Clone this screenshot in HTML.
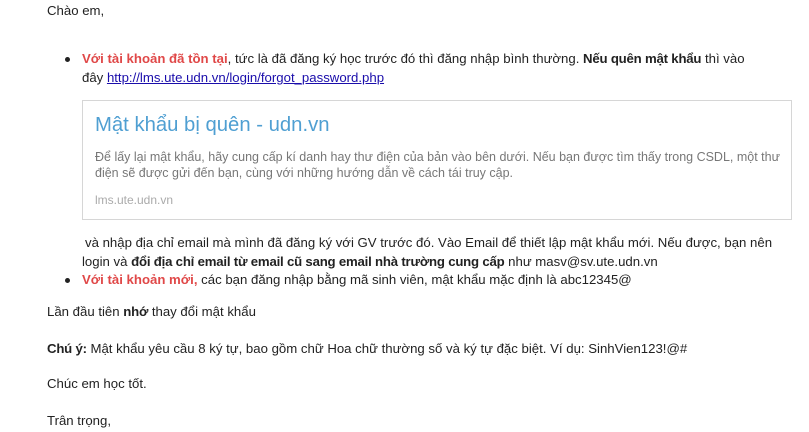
<!DOCTYPE html>
<html><head><meta charset="utf-8"><style>
body{margin:0;width:809px;height:432px;background:#fff;position:relative;overflow:hidden;font-family:"Liberation Sans",sans-serif;font-size:13.2px;color:#222}
.l{position:absolute;white-space:nowrap;line-height:16px}
.r{color:#e04848;font-weight:bold}
b{font-weight:bold;letter-spacing:-0.2px}
a{color:#1a0dab;text-decoration:underline}
.dot{position:absolute;width:5px;height:5px;border-radius:50%;background:#222}
.box{position:absolute;left:82px;top:100px;width:708px;height:118px;border:1px solid #d6d6d6}
</style></head><body>
<div class="l" style="left:47px;top:3px">Chào em,</div>
<div class="dot" style="left:65px;top:57px"></div>
<div class="l" style="left:82px;top:51px"><span class="r">Với tài khoản đã tồn tại</span>, tức là đã đăng ký học trước đó thì đăng nhập bình thường. <b>Nếu quên mật khẩu</b> thì vào</div>
<div class="l" style="left:82px;top:70px">đây <a>http://lms.ute.udn.vn/login/forgot_password.php</a></div>
<div class="box"></div>
<div class="l" style="left:95px;top:113px;font-size:20.3px;line-height:24px;color:#4f9fd2">Mật khẩu bị quên - udn.vn</div>
<div class="l" style="left:95px;top:149px;font-size:12.5px;color:#777">Để lấy lại mật khẩu, hãy cung cấp kí danh hay thư điện của bản vào bên dưới. Nếu bạn được tìm thấy trong CSDL, một thư</div>
<div class="l" style="left:95px;top:165px;font-size:12.5px;color:#777">điện sẽ được gửi đến bạn, cùng với những hướng dẫn về cách tái truy cập.</div>
<div class="l" style="left:95px;top:192px;font-size:12px;color:#aaa">lms.ute.udn.vn</div>
<div class="l" style="left:85px;top:235px">và nhập địa chỉ email mà mình đã đăng ký với GV trước đó. Vào Email để thiết lập mật khẩu mới. Nếu được, bạn nên</div>
<div class="l" style="left:82px;top:254px">login và <b>đổi địa chỉ email từ email cũ sang email nhà trường cung cấp</b> như masv@sv.ute.udn.vn</div>
<div class="dot" style="left:65px;top:278px"></div>
<div class="l" style="left:82px;top:272px"><span class="r">Với tài khoản mới,</span> các bạn đăng nhập bằng mã sinh viên, mật khẩu mặc định là abc12345@</div>
<div class="l" style="left:47px;top:304px">Lần đầu tiên <b>nhớ</b> thay đổi mật khẩu</div>
<div class="l" style="left:47px;top:341px"><b>Chú ý:</b> Mật khẩu yêu cầu 8 ký tự, bao gồm chữ Hoa chữ thường số và ký tự đặc biệt. Ví dụ: SinhVien123!@#</div>
<div class="l" style="left:47px;top:376px">Chúc em học tốt.</div>
<div class="l" style="left:47px;top:413px">Trân trọng,</div>
</body></html>
